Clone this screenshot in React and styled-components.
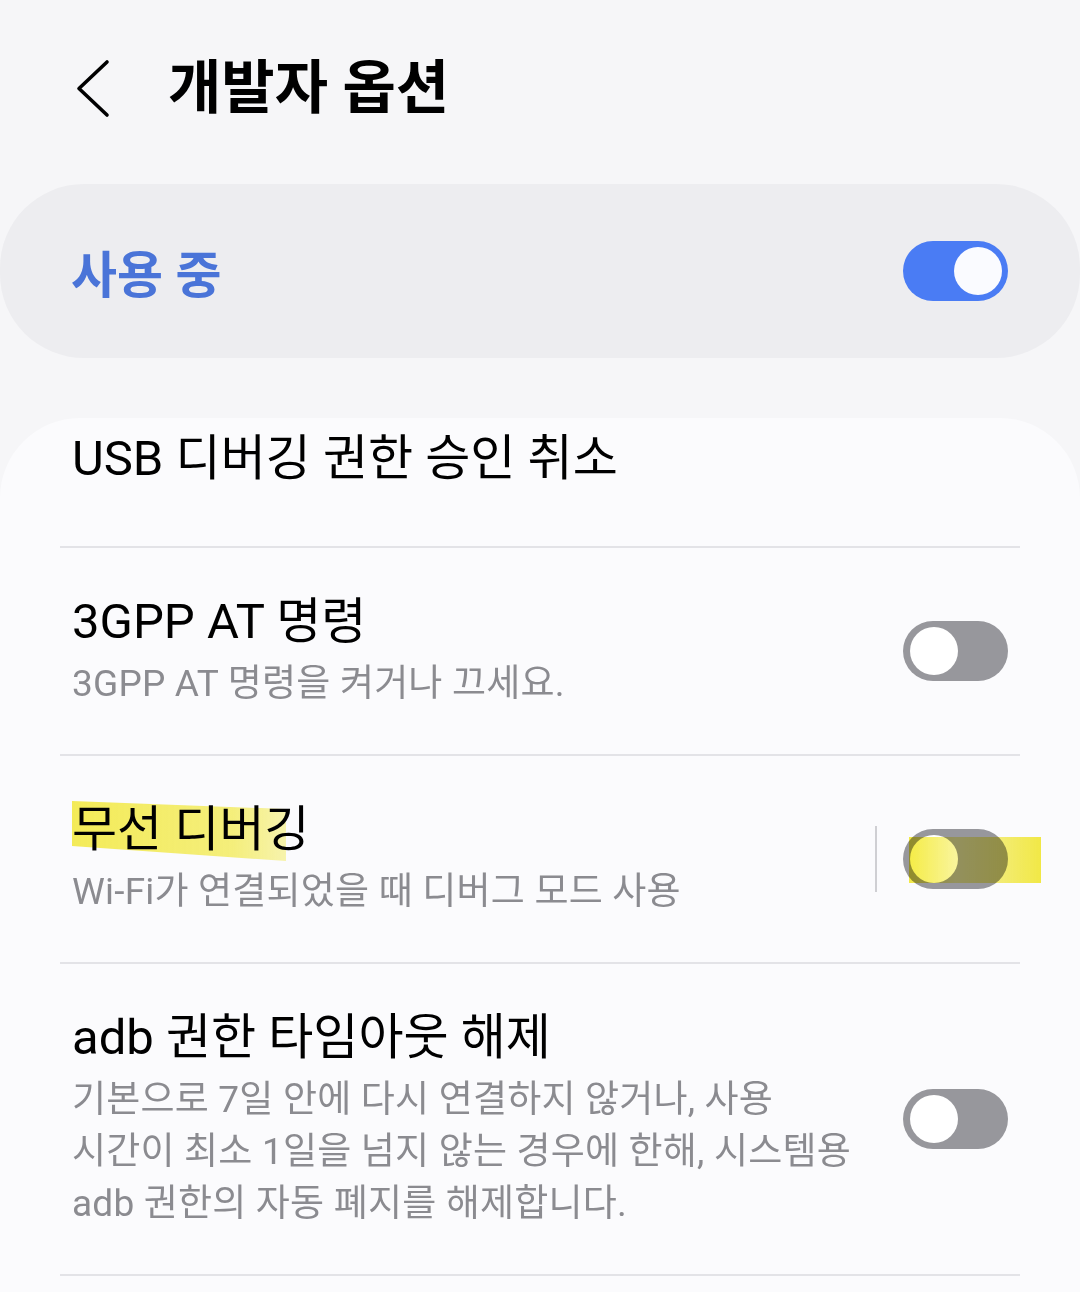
import styled, { createGlobalStyle } from "styled-components";

const GlobalStyles = createGlobalStyle`
  html, body {
    margin: 0;
    padding: 0;
    background: #f6f6f8;
  }
  body {
    font-family: Roboto, "Noto Sans CJK KR", "Noto Sans", sans-serif;
    color: #000;
  }
`;

const Page = styled.div`
  width: 1080px;
  min-height: 1292px;
  display: flex;
  flex-direction: column;
  overflow: hidden;
`;

const Header = styled.header`
  height: 176px;
  display: flex;
  align-items: center;
  padding-left: 74px;
  gap: 58px;
`;

const Title = styled.h1`
  margin: 0;
  font-size: 58px;
  font-weight: 700;
  line-height: 1;
`;

const MasterCard = styled.div`
  margin-top: 8px;
  height: 174px;
  border-radius: 84px;
  background: #ededf0;
  display: flex;
  align-items: center;
  justify-content: space-between;
  padding: 0 72px 0 71px;
`;

const MasterLabel = styled.span`
  font-size: 50px;
  font-weight: 700;
  color: #4a74d8;
`;

const ListCard = styled.section`
  margin-top: 60px;
  flex: 1;
  background: #fbfbfd;
  border-radius: 80px 80px 0 0;
  padding: 0 60px;
`;

const Row = styled.div`
  display: flex;
  align-items: center;
  padding: ${(p) => (p.$first ? "11px 12px 57px 12px" : "44px 12px 44px 12px")};
  border-bottom: 2px solid #e3e3e7;
`;

const TextCol = styled.div`
  flex: 1;
  display: flex;
  flex-direction: column;
  gap: 6px;
`;

const ItemTitle = styled.div`
  font-size: 49px;
  line-height: 60px;
  color: #000;
`;

const ItemSub = styled.div`
  font-size: 37px;
  line-height: 52px;
  letter-spacing: 0.2px;
  color: #8b8b90;
`;

const Marked = styled.span`
  position: relative;
  display: inline-block;

  &::after {
    content: "";
    position: absolute;
    left: 0;
    top: 1px;
    width: 214px;
    height: 60px;
    background: linear-gradient(
      90deg,
      rgba(246, 236, 60, 0.85),
      rgba(246, 238, 80, 0.75) 75%,
      rgba(248, 242, 120, 0.6)
    );
    clip-path: polygon(0 0, 100% 8px, 100% 100%, 0 45px);
    mix-blend-mode: multiply;
    pointer-events: none;
  }
`;

const VLine = styled.div`
  width: 2px;
  height: 66px;
  background: #cfcfd3;
  margin-right: 26px;
`;

const Track = styled.div`
  position: relative;
  width: 105px;
  height: 60px;
  box-sizing: border-box;
  border-radius: 30px;
  padding: 6px 6.5px;
  display: flex;
  justify-content: ${(p) => (p.$on ? "flex-end" : "flex-start")};
  background: ${(p) => (p.$on ? "#4a7cf4" : "#97979c")};
  flex-shrink: 0;
`;

const Thumb = styled.div`
  width: 48px;
  height: 48px;
  border-radius: 50%;
  background: ${(p) => (p.$on ? "#fafbff" : "#ffffff")};
`;

const ToggleMark = styled.div`
  position: absolute;
  left: 6px;
  top: 8px;
  width: 132px;
  height: 46px;
  background: linear-gradient(
    90deg,
    rgba(244, 234, 50, 0.9),
    rgba(246, 240, 110, 0.7) 35%,
    rgba(245, 236, 80, 0.8) 70%,
    rgba(244, 234, 50, 0.9)
  );
  mix-blend-mode: multiply;
  pointer-events: none;
`;

const Toggle = ({ on, marked }) => (
  <Track $on={on}>
    <Thumb $on={on} />
    {marked && <ToggleMark />}
  </Track>
);

const BackIcon = () => (
  <svg width="36" height="60" viewBox="0 0 36 60" fill="none">
    <path
      d="M33 4 L5 30.5 L33 57"
      stroke="#000"
      strokeWidth="3.6"
      strokeLinecap="round"
      strokeLinejoin="round"
    />
  </svg>
);

export default function App() {
  return (
    <>
      <GlobalStyles />
      <Page>
        <Header>
          <BackIcon />
          <Title>개발자 옵션</Title>
        </Header>

        <MasterCard>
          <MasterLabel>사용 중</MasterLabel>
          <Toggle on />
        </MasterCard>

        <ListCard>
          <Row $first>
            <TextCol>
              <ItemTitle>USB 디버깅 권한 승인 취소</ItemTitle>
            </TextCol>
          </Row>

          <Row>
            <TextCol>
              <ItemTitle>3GPP AT 명령</ItemTitle>
              <ItemSub>3GPP AT 명령을 켜거나 끄세요.</ItemSub>
            </TextCol>
            <Toggle />
          </Row>

          <Row>
            <TextCol>
              <ItemTitle>
                <Marked>무선 디버깅</Marked>
              </ItemTitle>
              <ItemSub>Wi-Fi가 연결되었을 때 디버그 모드 사용</ItemSub>
            </TextCol>
            <VLine />
            <Toggle marked />
          </Row>

          <Row>
            <TextCol>
              <ItemTitle>adb 권한 타임아웃 해제</ItemTitle>
              <ItemSub>
                기본으로 7일 안에 다시 연결하지 않거나, 사용
                <br />
                시간이 최소 1일을 넘지 않는 경우에 한해, 시스템용
                <br />
                adb 권한의 자동 폐지를 해제합니다.
              </ItemSub>
            </TextCol>
            <Toggle />
          </Row>
        </ListCard>
      </Page>
    </>
  );
}
